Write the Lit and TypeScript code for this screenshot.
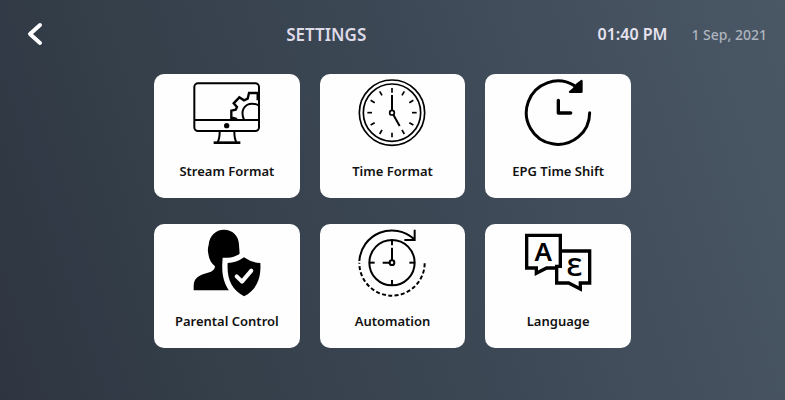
import { LitElement, html, css, svg } from "lit";
import { customElement, property } from "lit/decorators.js";

const spokes = (step: number, from: number, to: number) =>
  Array.from({ length: 360 / step }, (_, i) => {
    const a = (i * step * Math.PI) / 180;
    const x = Math.cos(a);
    const y = Math.sin(a);
    return svg`<line x1=${102 + x * from} y1=${101 + y * from} x2=${102 + x * to} y2=${101 + y * to} />`;
  });

const icons: Record<string, unknown> = {
  stream: svg`
    <g class="line" stroke-width="6">
      <rect x="4" y="13" width="194" height="143" rx="11" />
      <path d="M4 123H198" />
      <path d="M80 158C80 172 78 182 74 189M124 158C124 172 126 182 130 189" />
      <path stroke-width="8" d="M62 191H142" />
      <path stroke-width="7" d="M115 122V95L128 92L132 84L122 73L139 55L153 64L164 59L168 42H197V62" />
      <path d="M153 122C142 98 152 74 178 74Q189 74 198 80" />
      <path stroke-width="9" d="M117 117L132 121M195 42V64" />
    </g>
    <circle cx="101" cy="140" r="8" />`,
  clock: svg`
    <g class="line" stroke-width="5">
      <circle cx="102" cy="101" r="98" />
      <circle cx="102" cy="101" r="86" />
      ${spokes(30, 60, 74)}
      <circle cx="102" cy="101" r="7" />
      <path stroke-width="6" d="M102 94V48M106 107L125 141" />
    </g>`,
  shift: svg`
    <g class="line">
      <path stroke-width="9" stroke-linecap="round" d="M197 101A95 95 0 1 1 150 19" />
      <path stroke-width="10" stroke-linecap="round" stroke-linejoin="round" d="M103 64V102H140" />
    </g>
    <path d="M171 3Q176 1 176 7V38Q176 42 171 42H138Q132 41 136 36L146 28L156 14Z" />`,
  parental: svg`
    <path d="M2 184V170C3 150 14 142 30 136L54 128Q66 122 66 112C54 102 48 90 46 74C44 66 44 58 47 48C49 20 68 2 93 2C120 2 138 22 138 48C139 62 140 70 140 80V184Z" />
    <path class="halo" d="M153 85Q177 102 202 102C205 150 190 183 153 202C116 183 101 150 104 102Q130 102 153 85Z" />
    <path d="M153 85Q177 102 202 102C205 150 190 183 153 202C116 183 101 150 104 102Q130 102 153 85Z" />
    <path class="tick" d="M131 142L147 158L175 125" />`,
  automation: svg`
    <g class="line" stroke-width="6">
      <circle cx="102" cy="101" r="68" />
      ${spokes(90, 52, 68)}
      <circle cx="102" cy="101" r="7" />
      <path d="M102 94V56M95 101H74" />
      <path d="M4 96A98 98 0 0 1 168 30M170 2V33H139" />
      <path stroke-dasharray="12 7" d="M200 103A98 98 0 0 1 4 101" />
    </g>`,
  language: svg`
    <g class="line" stroke-width="10">
      <path d="M109 112V19H8V117H37V133L68 117H98" />
      <path d="M114 66H197V162H169V180L134 162H98V112H114" />
    </g>
    <text x="58" y="97" font-size="78">A</text>
    <text x="151" y="141" font-size="76">Ɛ</text>`,
};

@customElement("setting-tile")
export class SettingTile extends LitElement {
  @property() icon = "";
  @property() label = "";

  static styles = css`
    :host {
      display: block;
    }
    .tile {
      display: flex;
      flex-direction: column;
      align-items: center;
      gap: 14px;
      width: 100%;
      min-height: 124px;
      padding: 5px 4px 16px;
      border: 0;
      border-radius: 10px;
      background: #fefefe;
      color: #111;
      font: 600 13px/20px "Noto Sans", "Open Sans", sans-serif;
      cursor: pointer;
    }
    .icon {
      width: 68px;
      height: 68px;
      fill: #000;
    }
    .line {
      fill: none;
      stroke: #000;
    }
    .halo {
      stroke: #fefefe;
      stroke-width: 32;
    }
    .tick {
      fill: none;
      stroke: #fefefe;
      stroke-width: 12;
      stroke-linecap: round;
      stroke-linejoin: round;
    }
    text {
      font-family: "Noto Sans", "DejaVu Sans", sans-serif;
      font-weight: 600;
      text-anchor: middle;
    }
  `;

  render() {
    return html`<button class="tile" type="button">
      <svg class="icon" viewBox="0 0 204 204" aria-hidden="true">${icons[this.icon]}</svg>
      <span>${this.label}</span>
    </button>`;
  }
}

@customElement("app-root")
export class AppRoot extends LitElement {
  static styles = css`
    :host {
      display: block;
      box-sizing: border-box;
      min-height: 100vh;
      background: linear-gradient(72deg, #2e3541 0%, #343f4a 25%, #3b4653 50%, #434f5d 75%, #4a5765 100%);
      font-family: "Noto Sans", "Open Sans", sans-serif;
    }
    .bar {
      display: flex;
      align-items: center;
      height: 68px;
      padding: 0 18px 0 27px;
    }
    .back {
      display: flex;
      width: 28px;
      padding: 0;
      border: 0;
      background: none;
      cursor: pointer;
    }
    .back svg {
      width: 16px;
      height: 24px;
      fill: none;
      stroke: #fff;
      stroke-width: 4;
      stroke-linecap: round;
      stroke-linejoin: round;
    }
    .title {
      flex: 1;
      margin: 0;
      text-align: center;
      color: #dedbe8;
      font-size: 17px;
      font-weight: 600;
    }
    .time {
      color: #e6e2ef;
      font-size: 16px;
      font-weight: 600;
    }
    .date {
      margin-left: 24px;
      color: #aeb5bf;
      font-size: 14px;
      font-weight: 500;
    }
    .tiles {
      display: grid;
      grid-template-columns: repeat(3, 1fr);
      gap: 26px 20px;
      max-width: 477px;
      margin: 6px auto 0;
      padding-bottom: 24px;
    }
  `;

  private tiles = [
    ["stream", "Stream Format"],
    ["clock", "Time Format"],
    ["shift", "EPG Time Shift"],
    ["parental", "Parental Control"],
    ["automation", "Automation"],
    ["language", "Language"],
  ];

  render() {
    return html`
      <header class="bar">
        <button class="back" type="button" aria-label="Back">
          <svg viewBox="0 0 16 24"><path d="M13 3L3 12L13 21" /></svg>
        </button>
        <h1 class="title">SETTINGS</h1>
        <time class="time">01:40 PM</time>
        <time class="date">1 Sep, 2021</time>
      </header>
      <main class="tiles">
        ${this.tiles.map(([icon, label]) => html`<setting-tile icon=${icon} label=${label}></setting-tile>`)}
      </main>
    `;
  }
}
